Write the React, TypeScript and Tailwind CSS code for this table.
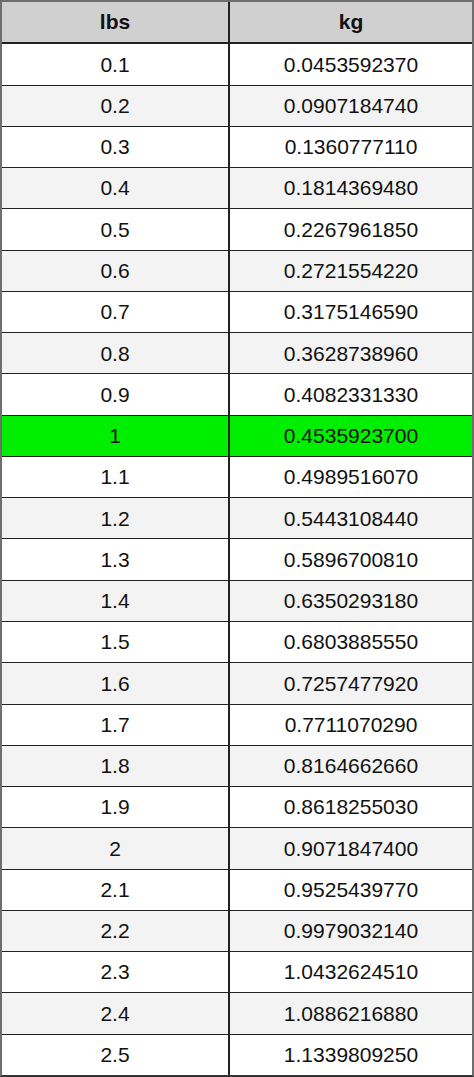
const rows: [string, string][] = [
  ["0.1", "0.0453592370"],
  ["0.2", "0.0907184740"],
  ["0.3", "0.1360777110"],
  ["0.4", "0.1814369480"],
  ["0.5", "0.2267961850"],
  ["0.6", "0.2721554220"],
  ["0.7", "0.3175146590"],
  ["0.8", "0.3628738960"],
  ["0.9", "0.4082331330"],
  ["1", "0.4535923700"],
  ["1.1", "0.4989516070"],
  ["1.2", "0.5443108440"],
  ["1.3", "0.5896700810"],
  ["1.4", "0.6350293180"],
  ["1.5", "0.6803885550"],
  ["1.6", "0.7257477920"],
  ["1.7", "0.7711070290"],
  ["1.8", "0.8164662660"],
  ["1.9", "0.8618255030"],
  ["2", "0.9071847400"],
  ["2.1", "0.9525439770"],
  ["2.2", "0.9979032140"],
  ["2.3", "1.0432624510"],
  ["2.4", "1.0886216880"],
  ["2.5", "1.1339809250"],
];

export default function App() {
  return (
    <div
      className="w-[474px] h-[1077px] flex flex-col border-2 border-[#6e6e6e] border-b-[#333] text-[21px] text-[#111]"
      style={{ fontFamily: '"Liberation Sans", Arial, sans-serif' }}
    >
      <div className="flex-1 flex bg-[#d0d0d0] border-b-2 border-[#222] font-bold">
        <div className="w-[228px] flex items-center justify-center border-r-2 border-[#222]">lbs</div>
        <div className="flex-1 flex items-center justify-center">kg</div>
      </div>
      {rows.map(([lbs, kg], i) => {
        const bg = lbs === "1" ? "bg-[#00ee00]" : i % 2 === 1 ? "bg-[#f3f3f3]" : "bg-white";
        const last = i === rows.length - 1;
        return (
          <div
            key={lbs}
            className={`flex-1 flex ${bg} ${last ? "" : "border-b-[1.5px] border-[#222]"}`}
          >
            <div className="w-[228px] flex items-center justify-center border-r-2 border-[#222]">{lbs}</div>
            <div className="flex-1 flex items-center justify-center">{kg}</div>
          </div>
        );
      })}
    </div>
  );
}
